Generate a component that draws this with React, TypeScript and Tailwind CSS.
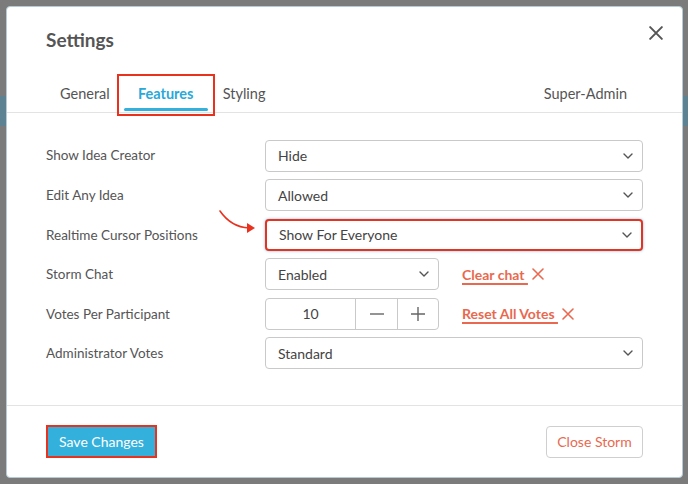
import React from "react";

const font = { fontFamily: "Lato, 'Open Sans', sans-serif" };

function Chevron() {
  return (
    <svg width="10" height="6" viewBox="0 0 10 6" className="shrink-0">
      <path d="M1 1l4 4 4-4" fill="none" stroke="#555" strokeWidth="1.4" strokeLinecap="round" strokeLinejoin="round" />
    </svg>
  );
}

function XIcon({ size = 12, color = "#e8694f", sw = 1.6 }: { size?: number; color?: string; sw?: number }) {
  return (
    <svg width={size} height={size} viewBox="0 0 12 12" className="shrink-0">
      <path d="M1 1l10 10M11 1L1 11" stroke={color} strokeWidth={sw} strokeLinecap="round" />
    </svg>
  );
}

function Select({ value, highlight = false, narrow = false }: { value: string; highlight?: boolean; narrow?: boolean }) {
  return (
    <div
      className={`flex h-[32px] items-center justify-between rounded-[4px] bg-white pl-[12px] pr-[9px] text-[14px] text-[#444] ${narrow ? "w-[174px]" : "w-[378px]"} ${
        highlight ? "border-2 border-[#e8321e] shadow-[0_0_3px_#6fc3ea]" : "border border-[#c9c9c9]"
      }`}
    >
      <span>{value}</span>
      <Chevron />
    </div>
  );
}

function Row({ label, children }: { label: string; children: React.ReactNode }) {
  return (
    <div className="flex h-[32px] items-center">
      <div className="w-[219px] text-[13.5px] text-[#555]">{label}</div>
      {children}
    </div>
  );
}

export default function App() {
  return (
    <div className="relative h-[484px] w-[688px] overflow-hidden bg-[#7b7b7b] pl-[6px] pt-[6px]" style={font}>
      <div className="absolute left-0 top-[96px] h-[30px] w-[7px] bg-[#5d8393]" />
      <div className="absolute right-0 top-[96px] h-[30px] w-[7px] bg-[#5d8393]" />
      <div className="relative flex h-[472px] w-[677px] flex-col rounded-[4px] border border-[#b5cbd5] bg-white">
        <button className="absolute right-[19px] top-[19px]">
          <XIcon size={14} color="#555" sw={1.7} />
        </button>
        <div className="pl-[39px] pt-[19px] text-[19px] font-bold text-[#555]">Settings</div>
        <div className="mt-[20px] flex h-[38px] items-end border-b border-[#e3e3e3] px-[39px] text-[14.5px]">
          <div className="flex h-full items-center pl-[14px] pr-[7px] pt-[2px] text-[#555]">General</div>
          <div className="relative -mb-[4px] flex h-[42px] w-[98px] items-center justify-center self-end border-2 border-[#e8321e] font-bold text-[#2aa8d8]">
            <span className="-mt-[2px]">Features</span>
            <div className="absolute bottom-[3px] left-[5px] right-[5px] h-[3px] rounded-full bg-[#34b0dc]" />
          </div>
          <div className="flex h-full items-center px-[8px] pt-[2px] text-[#555]">Styling</div>
          <div className="flex-1" />
          <div className="flex h-full items-center px-[16px] pt-[2px] text-[#555]">Super-Admin</div>
        </div>
        <div className="flex flex-col gap-[7.6px] px-[39px] pt-[27px]">
          <Row label="Show Idea Creator">
            <Select value="Hide" />
          </Row>
          <Row label="Edit Any Idea">
            <Select value="Allowed" />
          </Row>
          <Row label="Realtime Cursor Positions">
            <div className="relative">
              <svg className="absolute -left-[48px] -top-[10px]" width="44" height="28" viewBox="0 0 44 28">
                <path d="M3 2 Q14 18 32 19" fill="none" stroke="#e8321e" strokeWidth="1.6" strokeLinecap="round" />
                <path d="M30 14 L38 19 L30 24 Z" fill="#e8321e" />
              </svg>
              <Select value="Show For Everyone" highlight />
            </div>
          </Row>
          <Row label="Storm Chat">
            <Select value="Enabled" narrow />
            <a className="ml-[23px] flex items-center gap-[4px] text-[14px] font-bold text-[#e8694f] underline decoration-[1.5px] underline-offset-[3px]">
              <span>Clear chat&nbsp;</span>
              <XIcon />
            </a>
          </Row>
          <Row label="Votes Per Participant">
            <div className="flex h-[32px] w-[174px] rounded-[4px] border border-[#c9c9c9] text-[14px] text-[#444]">
              <div className="flex w-[90px] items-center justify-center border-r border-[#c9c9c9]">10</div>
              <div className="flex w-[42px] items-center justify-center border-r border-[#c9c9c9]">
                <svg width="14" height="2" viewBox="0 0 14 2"><path d="M0 1h14" stroke="#666" strokeWidth="1.4" /></svg>
              </div>
              <div className="flex flex-1 items-center justify-center">
                <svg width="14" height="14" viewBox="0 0 14 14"><path d="M0 7h14M7 0v14" stroke="#666" strokeWidth="1.4" /></svg>
              </div>
            </div>
            <a className="ml-[23px] flex items-center gap-[4px] text-[14px] font-bold text-[#e8694f] underline decoration-[1.5px] underline-offset-[3px]">
              <span>Reset All Votes&nbsp;</span>
              <XIcon />
            </a>
          </Row>
          <Row label="Administrator Votes">
            <Select value="Standard" />
          </Row>
        </div>
        <div className="flex-1" />
        <div className="flex h-[72px] items-center justify-between border-t border-[#e3e3e3] px-[39px]">
          <button className="h-[33px] w-[111px] border-2 border-[#e8321e] bg-[#34b0dc] text-[14px] text-white">Save Changes</button>
          <button className="h-[32px] w-[97px] rounded-[4px] border border-[#cfcfcf] bg-white text-[14px] text-[#e8694f]">Close Storm</button>
        </div>
      </div>
    </div>
  );
}
